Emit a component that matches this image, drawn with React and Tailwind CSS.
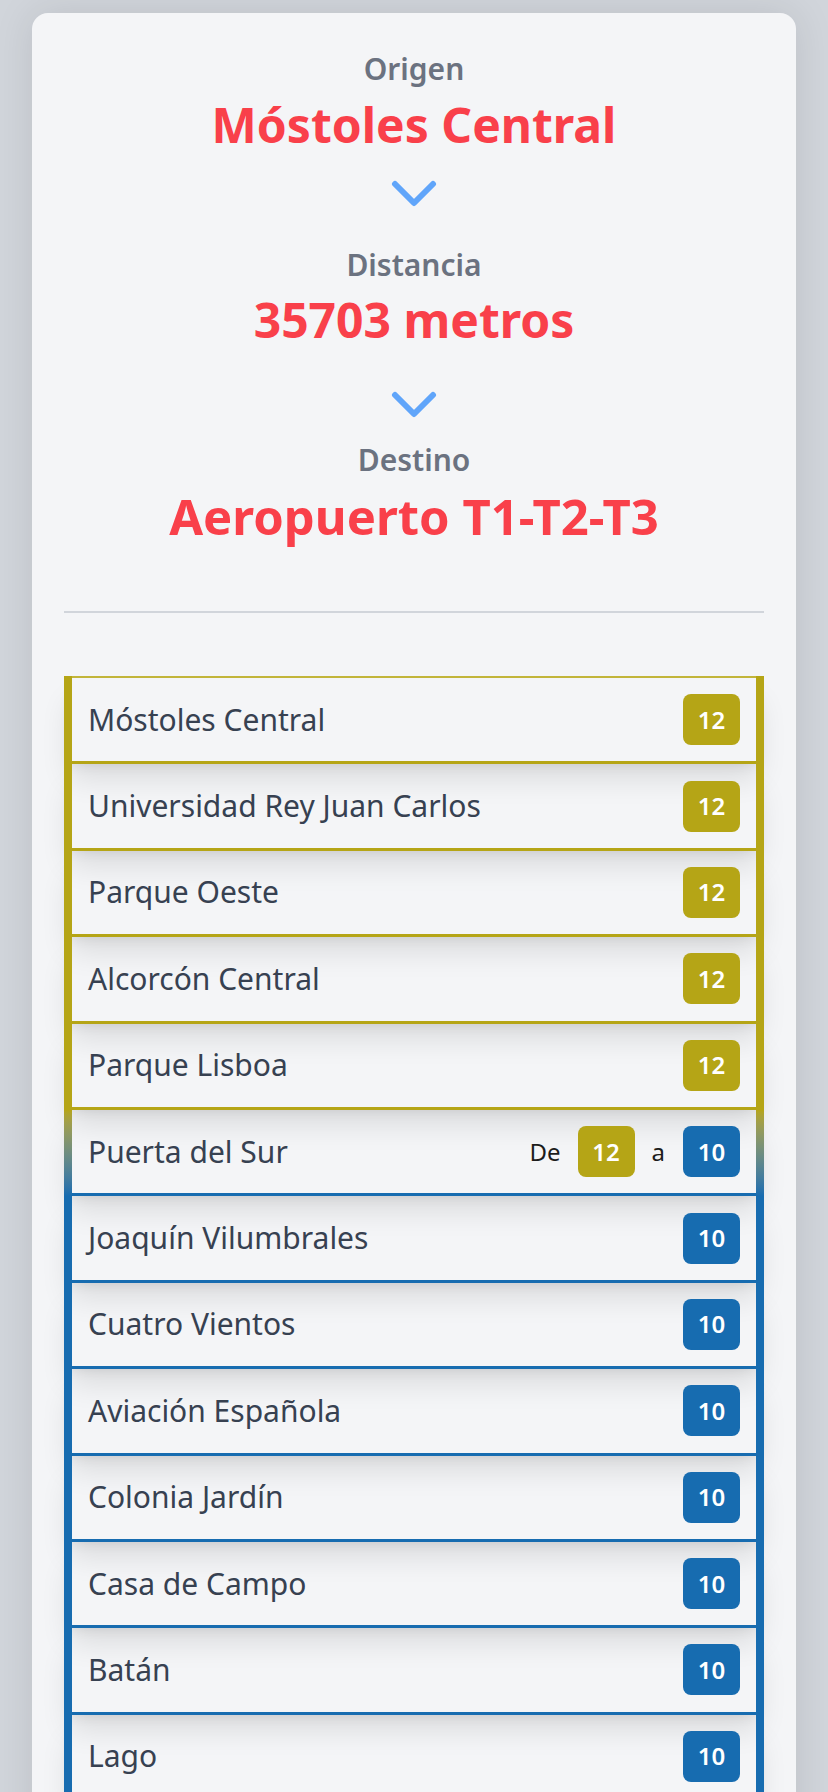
import React from "react";

const YELLOW = "#b5a516";
const BLUE = "#176cb0";

const stations = [
  { name: "Móstoles Central", line: "12" },
  { name: "Universidad Rey Juan Carlos", line: "12" },
  { name: "Parque Oeste", line: "12" },
  { name: "Alcorcón Central", line: "12" },
  { name: "Parque Lisboa", line: "12" },
  { name: "Puerta del Sur", from: "12", to: "10" },
  { name: "Joaquín Vilumbrales", line: "10" },
  { name: "Cuatro Vientos", line: "10" },
  { name: "Aviación Española", line: "10" },
  { name: "Colonia Jardín", line: "10" },
  { name: "Casa de Campo", line: "10" },
  { name: "Batán", line: "10" },
  { name: "Lago", line: "10" },
];

function Badge({ line }) {
  const cls = line === "12" ? "bg-[#b5a516]" : "bg-[#176cb0]";
  return (
    <span
      className={`${cls} flex h-[51px] w-[57px] items-center justify-center rounded-[8px] text-[24px] font-semibold text-white`}
    >
      {line}
    </span>
  );
}

function Chevron() {
  return (
    <svg width="46" height="27" viewBox="0 0 46 27" className="mx-auto block">
      <path
        d="M4 4 L23 23 L42 4"
        fill="none"
        stroke="#60a5fa"
        strokeWidth="6"
        strokeLinecap="round"
        strokeLinejoin="round"
      />
    </svg>
  );
}

function Row({ s, first }) {
  const transfer = !!s.from;
  const color = transfer ? BLUE : s.line === "12" ? YELLOW : BLUE;
  const barCls = transfer
    ? "bg-gradient-to-b from-[#b5a516] to-[#176cb0]"
    : s.line === "12"
    ? "bg-[#b5a516]"
    : "bg-[#176cb0]";
  return (
    <li className="flex shadow-[0_20px_30px_-6px_rgba(0,0,0,0.11),0_8px_12px_-8px_rgba(0,0,0,0.1)]">
      <div className={`w-[8px] shrink-0 ${barCls}`} />
      <div className="flex min-w-0 flex-1 flex-col">
        {first && <div className="h-[2px] bg-[#c2b53a]" />}
        <div className="flex h-[83.4px] items-center justify-between pl-[16px] pr-[16px]">
          <span className="text-[30px] leading-[40px] text-[#374151]">{s.name}</span>
          {transfer ? (
            <div className="flex items-center">
              <span className="mr-[17px] text-[24px] text-[#1c1c1c]">De</span>
              <Badge line={s.from} />
              <span className="ml-[17px] mr-[18px] text-[24px] text-[#1c1c1c]">a</span>
              <Badge line={s.to} />
            </div>
          ) : (
            <Badge line={s.line} />
          )}
        </div>
        <div className="h-[3px]" style={{ backgroundColor: color }} />
      </div>
      <div className={`w-[8px] shrink-0 ${barCls}`} />
    </li>
  );
}

export default function App() {
  return (
    <div className="h-[1792px] overflow-hidden bg-[#d1d5db] px-[32px] pt-[13px] font-['Noto_Sans',sans-serif]">
      <div className="rounded-[16px] bg-[#f4f5f7] px-[32px] pb-[40px] pt-[36px] shadow-[0_0_40px_rgba(0,0,0,0.1)]">
        <div className="text-center">
          <div className="text-[30px] font-semibold leading-[40px] text-[#6b7280]">Origen</div>
          <div className="mt-[8px] text-[48px] font-bold leading-[56px] text-[#f9404a]">
            Móstoles Central
          </div>
          <div className="mt-[27px]">
            <Chevron />
          </div>
          <div className="mt-[38px] text-[30px] font-semibold leading-[40px] text-[#6b7280]">
            Distancia
          </div>
          <div className="mt-[7px] text-[48px] font-bold leading-[56px] text-[#f9404a]">
            35703 metros
          </div>
          <div className="mt-[43px]">
            <Chevron />
          </div>
          <div className="mt-[22px] text-[30px] font-semibold leading-[40px] text-[#6b7280]">
            Destino
          </div>
          <div className="mt-[8px] text-[49px] font-bold leading-[56px] text-[#f9404a]">
            Aeropuerto T1-T2-T3
          </div>
        </div>
        <div className="mt-[67px] h-[2px] bg-[#d1d5db]" />
        <ul className="mt-[63px]">
          {stations.map((s, i) => (
            <Row key={s.name} s={s} first={i === 0} />
          ))}
        </ul>
      </div>
    </div>
  );
}
